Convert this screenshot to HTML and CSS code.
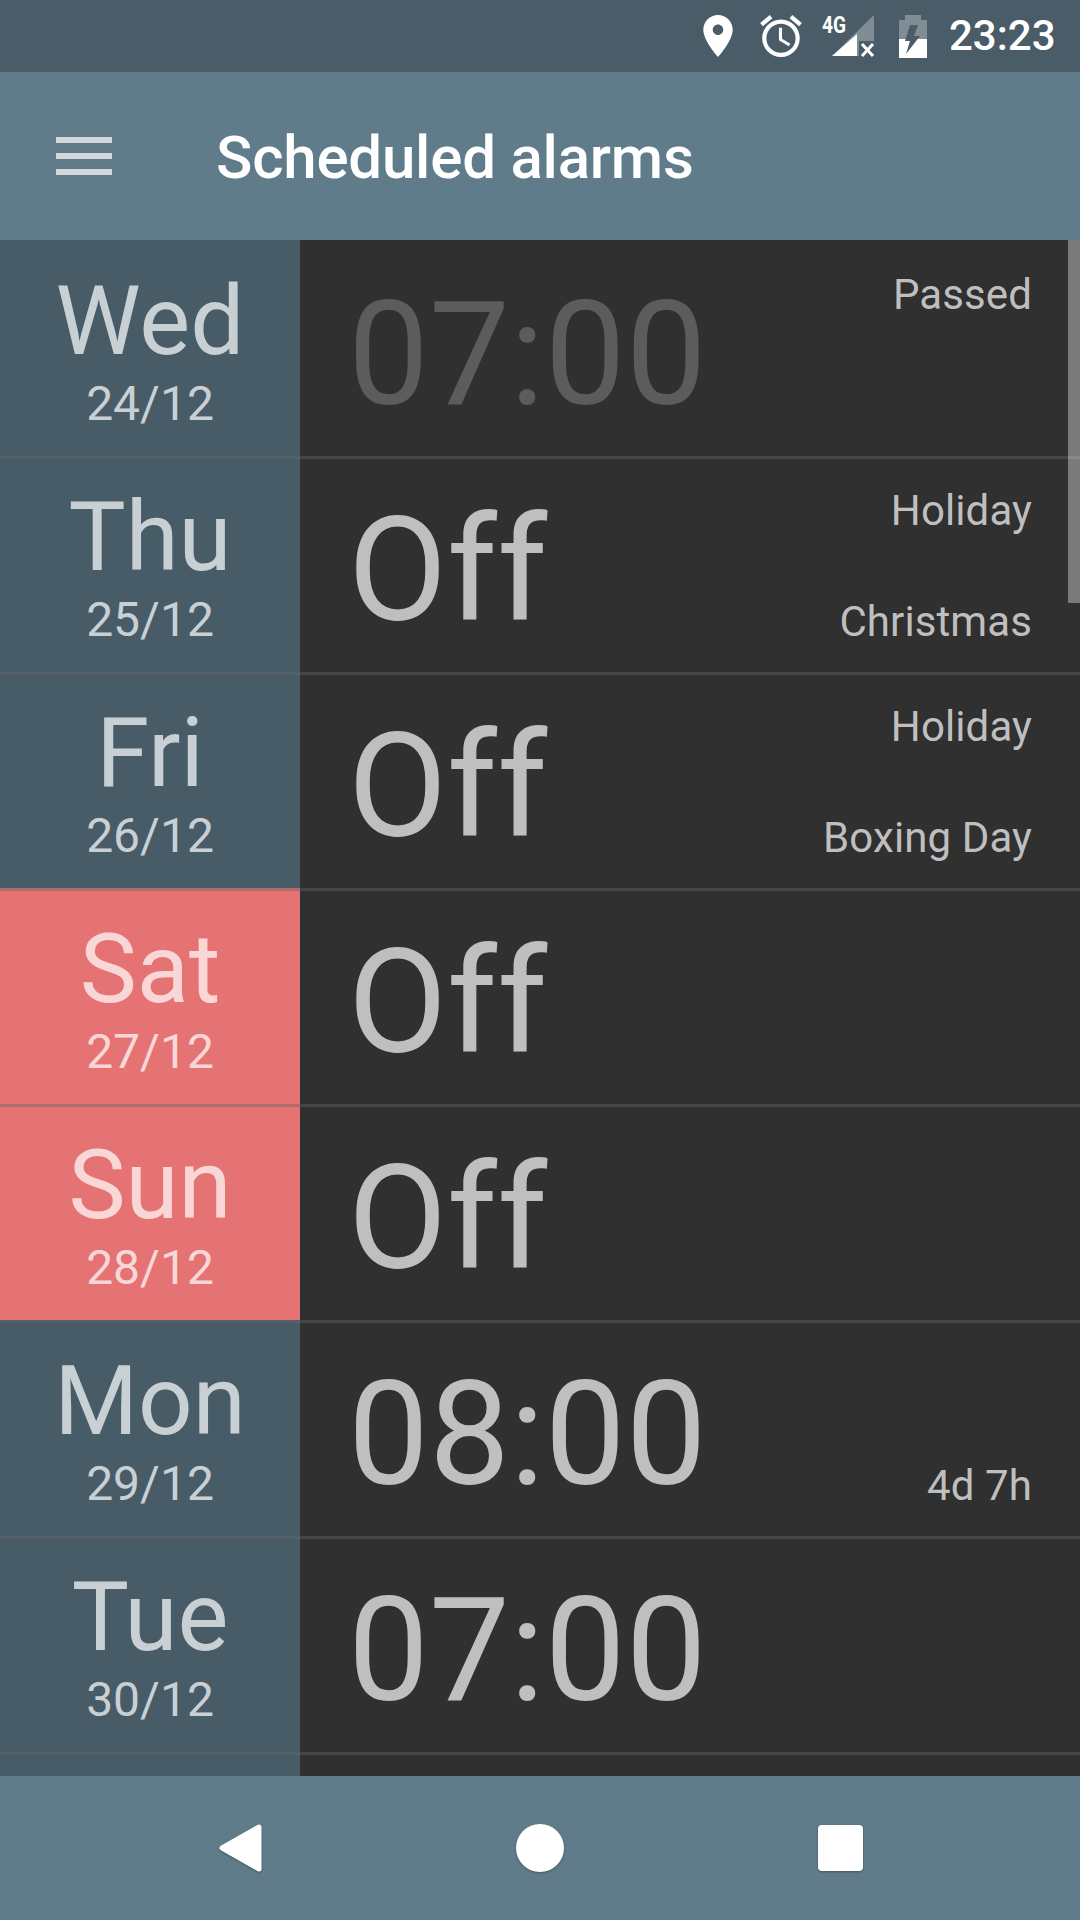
FILE: index.html
```html
<!DOCTYPE html>
<html lang="en">
    <head>
        <meta charset="UTF-8">
        <meta name="viewport" content="width=device-width, initial-scale=1.0">
        <title>Scheduled alarms</title>
        <link rel="stylesheet" href="styles.css">
    </head>
    <body>

<div class="screen">
    <div class="status-bar">
        <svg class="icon-place" viewBox="5 2 14 20"><path fill="#fff" d="M12 2C8.13 2 5 5.13 5 9c0 5.25 7 13 7 13s7-7.75 7-13c0-3.87-3.13-7-7-7zm0 9.5c-1.38 0-2.5-1.12-2.5-2.5s1.12-2.5 2.5-2.5 2.5 1.12 2.5 2.5-1.12 2.5-2.5 2.5z"/></svg>
        <svg class="icon-alarm" viewBox="2 1.86 20 20.14"><path fill="#fff" d="M22 5.72l-4.6-3.86-1.29 1.53 4.6 3.86L22 5.72zM7.88 3.39L6.6 1.86 2 5.71l1.29 1.53 4.59-3.85zM12.5 8H11v6l4.75 2.85.75-1.23-4-2.37V8zM12 4c-4.97 0-9 4.03-9 9s4.03 9 9 9 9-4.03 9-9-4.03-9-9-9zm0 16c-3.87 0-7-3.13-7-7s3.13-7 7-7 7 3.13 7 7-3.13 7-7 7z"/></svg>
        <svg class="icon-signal" viewBox="0 0 52 42">
            <polygon fill="#fff" fill-opacity="0.3" points="10,41 52,0 52,41"/>
            <polygon fill="#fff" points="10,41 35,19 35,41"/>
            <polygon fill="#4a5c67" points="37,26 52,26 52,42 37,42"/>
            <path stroke="#fff" stroke-width="3" d="M40 29 L51 41 M51 29 L40 41"/>
            <text class="signal-text" x="0" y="18" textLength="24" lengthAdjust="spacingAndGlyphs">4G</text>
        </svg>
        <svg class="icon-battery" viewBox="0 0 28 43">
            <path fill="#fff" fill-opacity="0.3" d="M6 0h16v5h6v19H0V5h6z"/>
            <path fill="#fff" d="M0 24h28v19H0z"/>
            <polygon fill="#4a5c67" points="11,10 19,10 15,21 21,21 7,39 11,26 6,26"/>
        </svg>
        <span class="clock">23:23</span>
    </div>

    <div class="toolbar">
        <div class="menu-icon">
            <div></div>
            <div></div>
            <div></div>
        </div>
        <h1>Scheduled alarms</h1>
    </div>

    <div class="alarm-list">
        <div class="row passed">
            <div class="day"><div class="day-name">Wed</div><div class="day-date">24/12</div></div>
            <div class="slot">
                <div class="slot-time">07:00</div>
                <div class="slot-notes"><span>Passed</span></div>
            </div>
        </div>
        <div class="row">
            <div class="day"><div class="day-name">Thu</div><div class="day-date">25/12</div></div>
            <div class="slot">
                <div class="slot-time">Off</div>
                <div class="slot-notes"><span>Holiday</span><span>Christmas</span></div>
            </div>
        </div>
        <div class="row">
            <div class="day"><div class="day-name">Fri</div><div class="day-date">26/12</div></div>
            <div class="slot">
                <div class="slot-time">Off</div>
                <div class="slot-notes"><span>Holiday</span><span>Boxing Day</span></div>
            </div>
        </div>
        <div class="row">
            <div class="day weekend"><div class="day-name">Sat</div><div class="day-date">27/12</div></div>
            <div class="slot">
                <div class="slot-time">Off</div>
            </div>
        </div>
        <div class="row">
            <div class="day weekend"><div class="day-name">Sun</div><div class="day-date">28/12</div></div>
            <div class="slot">
                <div class="slot-time">Off</div>
            </div>
        </div>
        <div class="row">
            <div class="day"><div class="day-name">Mon</div><div class="day-date">29/12</div></div>
            <div class="slot">
                <div class="slot-time">08:00</div>
                <div class="slot-notes"><span class="note-bottom">4d 7h</span></div>
            </div>
        </div>
        <div class="row">
            <div class="day"><div class="day-name">Tue</div><div class="day-date">30/12</div></div>
            <div class="slot">
                <div class="slot-time">07:00</div>
            </div>
        </div>
        <div class="row">
            <div class="day"></div>
            <div class="slot"></div>
        </div>
        <div class="scrollbar"></div>
    </div>

    <div class="nav-bar">
        <div class="nav-item">
            <svg class="nav-back" viewBox="0 0 44 48"><polygon points="4,24 41,3 41,45"/></svg>
        </div>
        <div class="nav-item"><div class="nav-home"></div></div>
        <div class="nav-item"><div class="nav-recent"></div></div>
    </div>
</div>

</body>
</html>
```

FILE: styles.css
```css
body {
    font-family: Roboto, "Liberation Sans", sans-serif;
    margin: 0;
    background-color: #303030;
}
.screen {
    display: flex;
    flex-direction: column;
    width: 1080px;
    height: 1920px;
    overflow: hidden;
}

/* status bar */
.status-bar {
    display: flex;
    align-items: center;
    height: 72px;
    padding-left: 703px;
    box-sizing: border-box;
    background-color: #4a5c67;
    color: #fff;
}
.icon-place {
    width: 30px;
    height: 42px;
}
.icon-alarm {
    width: 42px;
    height: 42px;
    margin-left: 27px;
}
.icon-signal {
    width: 52px;
    height: 42px;
    margin-left: 20px;
    overflow: visible;
}
.signal-text {
    font-family: Roboto, sans-serif;
    font-size: 23px;
    font-weight: 700;
    fill: #fff;
}
.icon-battery {
    width: 28px;
    height: 43px;
    margin-left: 25px;
}
.clock {
    margin-left: 22px;
    font-size: 42px;
    font-weight: 500;
    line-height: 48px;
}

/* toolbar */
.toolbar {
    display: flex;
    align-items: center;
    height: 168px;
    padding-left: 56px;
    box-sizing: border-box;
    background-color: #607c8a;
}
.menu-icon {
    display: flex;
    flex-direction: column;
    gap: 10px;
    width: 56px;
}
.menu-icon div {
    height: 6px;
    background-color: #d2d9dd;
}
.toolbar h1 {
    margin: 0 0 0 104px;
    padding-top: 4px;
    font-size: 60px;
    font-weight: 500;
    line-height: 68px;
    letter-spacing: -0.2px;
    color: #fff;
}

/* alarm rows */
.alarm-list {
    position: relative;
    flex: 1;
    overflow: hidden;
}
.row {
    position: relative;
    display: grid;
    grid-template-columns: 300px 1fr;
    height: 216px;
}
.row + .row::before {
    content: "";
    position: absolute;
    top: 0;
    left: 0;
    right: 0;
    height: 3px;
    background-color: rgba(101, 101, 101, 0.41);
}
.day {
    padding-top: 33px;
    box-sizing: border-box;
    text-align: center;
    background-color: #485c67;
    color: #c9d0d4;
}
.day.weekend {
    background-color: #e57373;
    color: #f9d7d7;
}
.day-name {
    font-size: 96px;
    line-height: 96px;
}
.day-date {
    margin-top: 11px;
    font-size: 48px;
    line-height: 48px;
}
.slot {
    display: flex;
    justify-content: space-between;
    padding: 0 48px 0 48px;
    background-color: #303030;
    color: #bfbfbf;
}
.slot-time {
    padding-top: 43px;
    font-size: 144px;
    line-height: 144px;
}
.slot-notes {
    display: flex;
    flex-direction: column;
    justify-content: space-between;
    align-items: flex-end;
    padding: 27px 0 22px;
    font-size: 42px;
    line-height: 56px;
    letter-spacing: 0.1px;
}
.note-bottom {
    margin-top: auto;
}
.passed .slot-time {
    color: #5c5c5c;
}
.scrollbar {
    position: absolute;
    top: 0;
    right: 0;
    width: 12px;
    height: 363px;
    background-color: rgba(255, 255, 255, 0.36);
}

/* navigation bar */
.nav-bar {
    display: flex;
    justify-content: center;
    align-items: center;
    height: 144px;
    background-color: #607c8a;
}
.nav-item {
    display: flex;
    justify-content: center;
    width: 300px;
    filter: drop-shadow(0 1px 1px rgba(0, 0, 0, 0.3));
}
.nav-back {
    width: 44px;
    height: 48px;
}
.nav-back polygon {
    fill: #fff;
    stroke: #fff;
    stroke-width: 5;
    stroke-linejoin: round;
}
.nav-home {
    width: 48px;
    height: 48px;
    border-radius: 50%;
    background-color: #fff;
}
.nav-recent {
    width: 45px;
    height: 46px;
    border-radius: 4px;
    background-color: #fff;
}
```
